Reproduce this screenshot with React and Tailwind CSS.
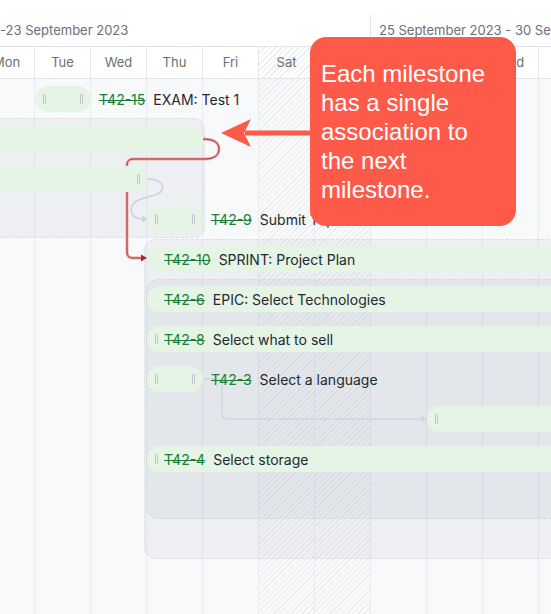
import React from 'react';

const DAYS = ['Mon', 'Tue', 'Wed', 'Thu', 'Fri', 'Sat', 'Sun', 'Mon', 'Tue', 'Wed', 'Thu'];
const COL_START = [
  'col-start-1',
  'col-start-2',
  'col-start-3',
  'col-start-4',
  'col-start-5',
  'col-start-6',
  'col-start-7',
  'col-start-8',
  'col-start-9',
  'col-start-10',
  'col-start-11',
];
const HATCH =
  'bg-[repeating-linear-gradient(135deg,#ebeced_0px,#ebeced_1px,transparent_1px,transparent_4px)]';

function Grip({ hidden }) {
  return (
    <span
      className={`block h-[10px] w-[3px] shrink-0 border-x border-[#c2c7cd] ${hidden ? 'opacity-0' : ''}`}
    />
  );
}

function Key({ children }) {
  return (
    <span className="text-[14px] text-[#1a7f37] line-through decoration-[#1a7f37] whitespace-nowrap">
      {children}
    </span>
  );
}

function Title({ children }) {
  return <span className="ml-2 text-[14px] text-[#24292f] whitespace-nowrap">{children}</span>;
}

function ShortBar() {
  return (
    <div className="flex h-[26px] w-[56px] shrink-0 items-center justify-between rounded-full bg-[#e5f4e5] pl-2 pr-2">
      <Grip />
      <Grip />
    </div>
  );
}

function LongBar({ grip, k, title }) {
  return (
    <div className="flex h-[26px] flex-1 items-center rounded-l-full bg-[#e5f4e5] pl-2">
      <Grip hidden={!grip} />
      {k && <span className="ml-[6px]"><Key>{k}</Key></span>}
      {title && <Title>{title}</Title>}
    </div>
  );
}

export default function App() {
  return (
    <div className="relative h-[614px] w-[551px] overflow-hidden bg-[#f8f9fb] font-['Inter',sans-serif]">
      {/* week header */}
      <div className="flex h-[46px] items-end bg-white">
        <div className="flex h-[31px] w-[370px] shrink-0 items-center whitespace-nowrap text-[13px] text-[#6b6f76]">
          -23 September 2023
        </div>
        <div className="flex h-[31px] flex-1 items-center whitespace-nowrap border-l border-[#e1e4e8] pl-2 text-[13px] text-[#6b6f76]">
          25 September 2023 - 30 September 2023
        </div>
      </div>

      {/* day header */}
      <div className="ml-[-21px] flex h-[33px] border-y border-[#e1e4e8] bg-white">
        {DAYS.map((d, i) => (
          <div
            key={i}
            className={`flex w-[56px] shrink-0 items-center justify-center border-r border-[#e4e6ea] text-[13px] text-[#6b6f76] ${i === 5 || i === 6 ? HATCH : ''}`}
          >
            {d}
          </div>
        ))}
      </div>

      {/* connectors */}
      <svg className="pointer-events-none absolute left-0 top-0" width="551" height="614">
        <path
          d="M147,179 C160,179 164,184 162,190 C160,197 140,196 134,203 C128,210 132,219 143,219"
          fill="none"
          stroke="#cbd3dd"
          strokeWidth="1.5"
        />
        <path d="M142,215.5 L147.5,219 L142,222.5 Z" fill="#cbd3dd" />
        <path
          d="M203,379 L216,379 Q222,379 222,385 L222,413 Q222,419 228,419 L422,419"
          fill="none"
          stroke="#cfd6df"
          strokeWidth="1.5"
        />
        <path d="M421,415.5 L427,419 L421,422.5 Z" fill="#cfd6df" />
        <path
          d="M203,139 C214,139 219,143 219,149 C219,155 214,159 205,159 L133,159 Q127,159 127,165 L127,252 Q127,258 133,258 L142,258"
          fill="none"
          stroke="#e6b0b0"
          strokeWidth="3"
        />
        <path
          d="M203,139 C214,139 219,143 219,149 C219,155 214,159 205,159 L133,159 Q127,159 127,165 L127,252 Q127,258 133,258 L142,258"
          fill="none"
          stroke="#b3262a"
          strokeWidth="1"
        />
        <path d="M141,254.5 L147,258 L141,261.5 Z" fill="#b3262a" />
        {/* callout arrow */}
        <path d="M245,130.5 L314,130.5 L314,135.5 L245,135.5 Z" fill="#fe5a4a" />
        <path d="M221,133 L251,119 L244,133 L251,147 Z" fill="#fe5a4a" />
      </svg>

      {/* timeline body */}
      <div className="ml-[-21px] grid grid-cols-[repeat(11,56px)] grid-rows-[repeat(14,40px)]">
        {DAYS.map((d, i) => (
          <div
            key={i}
            className={`${COL_START[i]} row-span-full border-r border-[#e9ebee] ${i === 5 || i === 6 ? HATCH : ''}`}
          />
        ))}

        {/* milestone groups */}
        <div className="col-start-1 col-end-5 row-start-2 row-end-5 -ml-[30px] -mr-[2px] -mt-[1px] mb-[1px] rounded-[12px] border border-dashed border-[#dcdfe4] bg-[rgba(100,116,139,0.07)]" />
        <div className="col-start-4 col-end-12 row-start-5 row-end-13 -ml-[3px] -mr-[20px] rounded-[12px] border border-dashed border-[#dcdfe4] bg-[rgba(100,116,139,0.07)]" />
        <div className="col-start-4 col-end-12 row-start-6 row-end-12 -ml-[1px] -mr-[20px] rounded-[12px] border border-dashed border-[#d6dae0] bg-[rgba(100,116,139,0.07)]" />

        {/* rows */}
        <div className="relative col-start-2 col-end-12 row-start-1 flex items-center">
          <ShortBar />
          <span className="ml-2">
            <Key>T42-15</Key>
          </span>
          <Title>EXAM: Test 1</Title>
        </div>

        <div className="relative col-start-1 col-end-5 row-start-2 -ml-[30px] h-[26px] self-center rounded-full bg-[#e5f4e5]" />

        <div className="relative col-start-1 col-end-4 row-start-3 -ml-[30px] flex h-[26px] items-center justify-end self-center rounded-full bg-[#e5f4e5] pr-[7px]">
          <Grip />
        </div>

        <div className="relative col-start-4 col-end-12 row-start-4 flex items-center">
          <ShortBar />
          <span className="ml-2">
            <Key>T42-9</Key>
          </span>
          <Title>Submit Topic</Title>
        </div>

        <div className="relative col-start-4 col-end-12 row-start-5 -mr-[20px] flex items-center">
          <LongBar k="T42-10" title="SPRINT: Project Plan" />
        </div>

        <div className="relative col-start-4 col-end-12 row-start-6 -mr-[20px] flex items-center">
          <LongBar k="T42-6" title="EPIC: Select Technologies" />
        </div>

        <div className="relative col-start-4 col-end-12 row-start-7 -mr-[20px] flex items-center">
          <LongBar grip k="T42-8" title="Select what to sell" />
        </div>

        <div className="relative col-start-4 col-end-12 row-start-8 flex items-center">
          <ShortBar />
          <span className="ml-2">
            <Key>T42-3</Key>
          </span>
          <Title>Select a language</Title>
        </div>

        <div className="relative col-start-9 col-end-12 row-start-9 -mr-[20px] flex items-center">
          <LongBar grip />
        </div>

        <div className="relative col-start-4 col-end-12 row-start-10 -mr-[20px] flex items-center">
          <LongBar grip k="T42-4" title="Select storage" />
        </div>
      </div>

      {/* annotation */}
      <div className="absolute left-[310px] top-[37px] h-[189px] w-[206px] rounded-[16px] bg-[#fe5a4a] pl-[11px] pr-[10px] pt-[22px] font-['Liberation_Sans',Arial,sans-serif] text-[24px] leading-[29px] text-white">
        Each milestone has a single association to the next milestone.
      </div>
    </div>
  );
}
